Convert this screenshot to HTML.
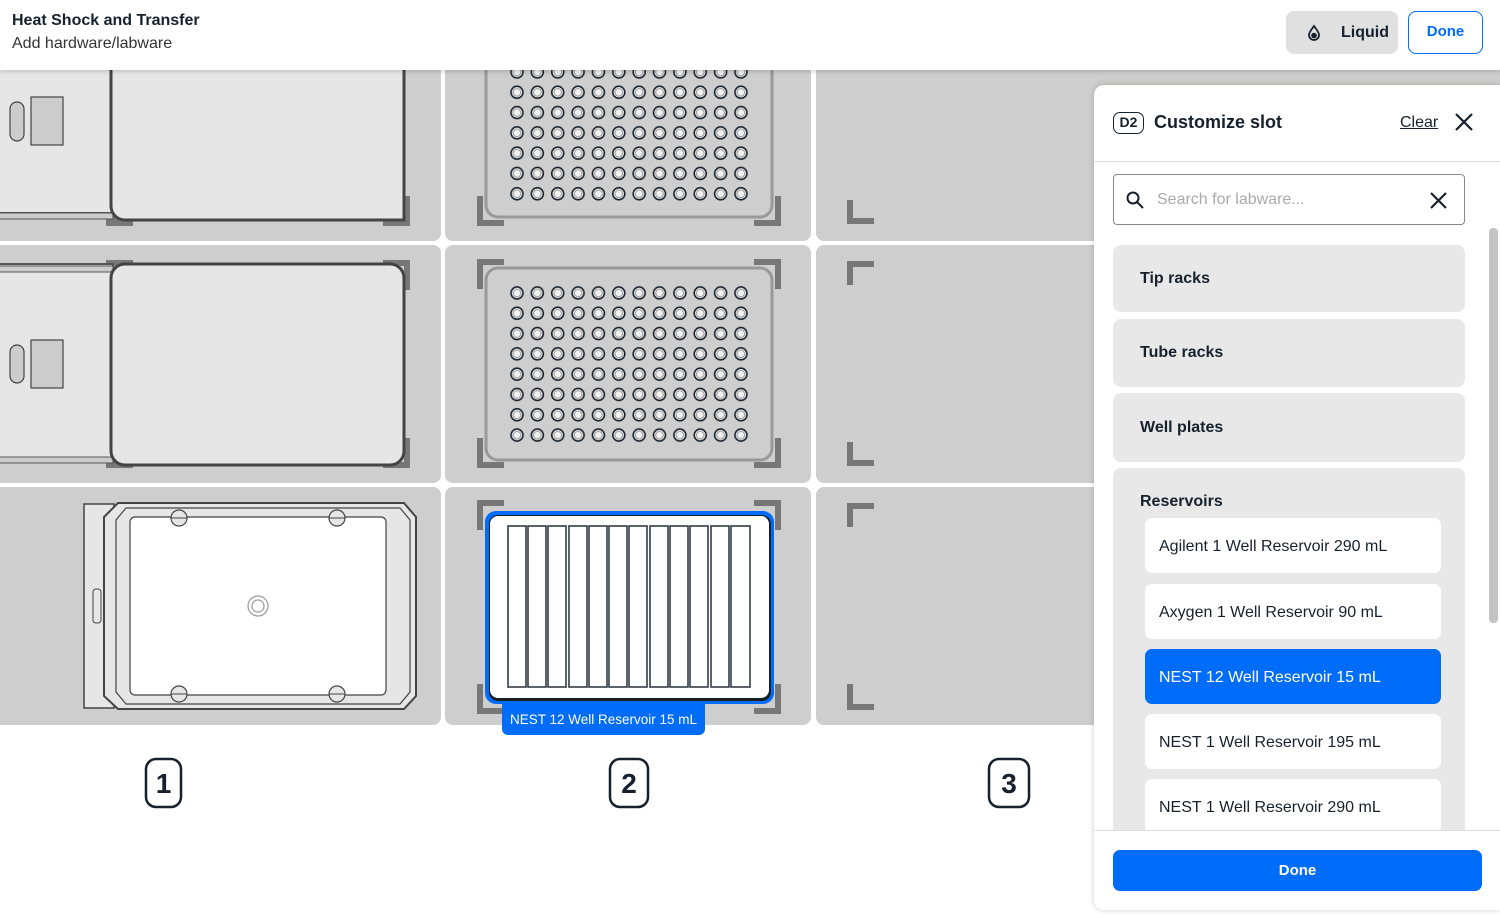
<!DOCTYPE html>
<html><head><meta charset="utf-8"><style>
*{box-sizing:border-box;margin:0;padding:0}
body{width:1500px;height:914px;overflow:hidden;background:#fff;font-family:"Liberation Sans",sans-serif;position:relative;color:#16212d}
.hdr{position:absolute;left:0;top:0;width:1500px;height:70px;background:#fff;box-shadow:0 2px 4px rgba(0,0,0,.15);z-index:3}
.t1{position:absolute;left:12px;top:12px;font-size:16px;font-weight:bold}
.t2{position:absolute;left:12px;top:35px;font-size:16px;color:#333}
.liq{position:absolute;left:1286px;top:11px;width:112px;height:43px;background:#e0e0e0;border-radius:8px;font-size:16px;font-weight:bold;padding:13px 0 0 55px}
.dn{position:absolute;left:1408px;top:11px;width:75px;height:43px;border:1.5px solid #006cfa;border-radius:8px;color:#006cfa;font-weight:bold;font-size:15px;text-align:center;line-height:40px}
svg.deck{position:absolute;left:0;top:0}
.panel{position:absolute;left:1094px;top:85px;width:406px;height:825px;background:#fff;border-radius:10px 0 0 10px;box-shadow:0 0 6px rgba(0,0,0,.2);overflow:hidden;z-index:4}
.ph{height:77px;border-bottom:1px solid #ddd;position:relative}
.d2{position:absolute;left:19px;top:27px;width:31px;height:22px;border:1.5px solid #16212d;border-radius:7px;font-size:14px;font-weight:bold;text-align:center;line-height:19px}
.cs{position:absolute;left:60px;top:27px;font-size:18px;font-weight:bold}
.clr{position:absolute;left:306px;top:29px;font-size:16px;text-decoration:underline}
.srch{position:absolute;left:19px;top:89px;width:352px;height:51px;border:1px solid #888;border-radius:4px;color:#aaa;font-size:16px;padding:16px 0 0 43px}
.cat{position:absolute;left:19px;width:352px;background:#e8e8e8;border-radius:8px;font-size:16px;font-weight:bold;padding-left:27px}
.it{position:absolute;left:51px;width:296px;height:55px;background:#fff;border-radius:7px;font-size:16px;padding:20px 0 0 14px}
.foot{position:absolute;left:0;top:745px;width:406px;height:80px;background:#fff;border-top:1px solid #ddd}
.fb{position:absolute;left:19px;top:19px;width:369px;height:41px;background:#006cfa;border-radius:7px;color:#fff;font-weight:bold;font-size:15px;text-align:center;line-height:41px}
</style></head><body>
<div style="position:absolute;left:1090px;top:60px;width:410px;height:60px;background:#cdcecd;border-radius:0 10px 0 0"></div>
<svg class="deck" width="1100" height="914" viewBox="0 0 1100 914">
<defs>
<pattern id="w" patternUnits="userSpaceOnUse" x="506.8" y="61.8" width="20.36" height="20.3"><circle cx="10.2" cy="10.2" r="6" fill="#f2f2f2" stroke="#1a222c" stroke-width="1.6"/><circle cx="10.2" cy="10.2" r="3.8" fill="none" stroke="#999" stroke-width="1"/></pattern>
<pattern id="w2" patternUnits="userSpaceOnUse" x="506.8" y="282.8" width="20.36" height="20.3"><circle cx="10.2" cy="10.2" r="6" fill="#f2f2f2" stroke="#1a222c" stroke-width="1.6"/><circle cx="10.2" cy="10.2" r="3.8" fill="none" stroke="#999" stroke-width="1"/></pattern>
</defs>
<g fill="#cdcecd">
<rect x="-10" y="60" width="451" height="181" rx="8"/><rect x="445" y="60" width="366" height="181" rx="8"/><rect x="816" y="60" width="290" height="181" rx="8"/>
<rect x="-10" y="245" width="451" height="238" rx="8"/><rect x="445" y="245" width="366" height="238" rx="8"/><rect x="816" y="245" width="290" height="238" rx="8"/>
<rect x="-10" y="487" width="451" height="238" rx="8"/><rect x="445" y="487" width="366" height="238" rx="8"/><rect x="816" y="487" width="290" height="238" rx="8"/>
</g>
<g fill="#777">
<path d="M106 216h27v10h-27z M383 226h27v-30h-6v24h-21z"/>
<path d="M106 260h27v6h-27z M383 260h27v30h-6v-24h-21z M106 462h27v6h-27z M383 468h27v-30h-6v24h-21z"/>
<path d="M477 196h6v24h21v6h-27z M781 196h-6v24h-21v6h27z"/>
<path d="M477 289h6v-24h21v-6h-27z M781 289h-6v-24h-21v-6h27z M477 438h6v24h21v6h-27z M781 438h-6v24h-21v6h27z"/>
<path d="M477 530h6v-24h21v-6h-27z M781 530h-6v-24h-21v-6h27z M477 684h6v24h21v6h-27z M781 684h-6v24h-21v6h27z"/>
<path d="M847 200h6v18h21v6h-27z M847 285h6v-18h21v-6h-27z M847 442h6v18h21v6h-27z M847 527h6v-18h21v-6h-27z M847 684h6v20h21v6h-27z"/>
</g>
<rect x="-5" y="55" width="118" height="158" fill="#e6e6e6" stroke="#555" stroke-width="2"/>
<rect x="-5" y="213" width="118" height="6" fill="#ccc" stroke="#555" stroke-width="1"/>
<path d="M111 60V206a14 14 0 0 0 14 14H404V60" fill="#e6e6e6" stroke="#444" stroke-width="3"/>
<rect x="10" y="102" width="14" height="39" rx="7" fill="#ccc" stroke="#444" stroke-width="1.2"/>
<rect x="31" y="97" width="32" height="48" fill="#ccc" stroke="#444" stroke-width="1.2"/>
<rect x="-5" y="264" width="118" height="196" fill="#e6e6e6" stroke="#555" stroke-width="2"/>
<rect x="-5" y="266" width="118" height="6" fill="#ccc" stroke="#555" stroke-width="1"/>
<rect x="-5" y="457" width="118" height="6" fill="#ccc" stroke="#555" stroke-width="1"/>
<rect x="111" y="264" width="293" height="201" rx="14" fill="#e6e6e6" stroke="#444" stroke-width="3"/>
<rect x="10" y="345" width="14" height="38" rx="7" fill="#ccc" stroke="#444" stroke-width="1.2"/>
<rect x="31" y="340" width="32" height="48" fill="#ccc" stroke="#444" stroke-width="1.2"/>
<rect x="84" y="504" width="30" height="204" fill="#e6e6e6" stroke="#444" stroke-width="1.5"/>
<rect x="93" y="589" width="8" height="34" rx="3" fill="#e6e6e6" stroke="#444" stroke-width="1"/>
<path d="M118 503H404l12 14V696l-12 13H118l-14-13V517z" fill="#e6e6e6" stroke="#444" stroke-width="2"/>
<path d="M126 508H400l10 12V692l-10 12H126l-10-12V520z" fill="none" stroke="#444" stroke-width="1.2"/>
<rect x="130" y="517" width="256" height="178" rx="5" fill="#fff" stroke="#444" stroke-width="1.2"/>
<g fill="#e6e6e6" stroke="#444" stroke-width="1.2"><circle cx="179" cy="518" r="8"/><circle cx="337" cy="518" r="8"/><circle cx="179" cy="694" r="8"/><circle cx="337" cy="694" r="8"/></g>
<g stroke="#444" stroke-width="1"><path d="M171 518h16M329 518h16M171 694h16M329 694h16"/></g>
<circle cx="258" cy="606" r="10" fill="none" stroke="#999" stroke-width="1.2"/><circle cx="258" cy="606" r="6" fill="none" stroke="#999" stroke-width="1.2"/>
<path d="M486 60V205a12 12 0 0 0 12 12H760a12 12 0 0 0 12-12V60" fill="#cdcecd" stroke="#999" stroke-width="3"/>
<rect x="506" y="62" width="245" height="142" fill="url(#w)"/>
<rect x="486" y="268" width="286" height="192" rx="12" fill="#cdcecd" stroke="#999" stroke-width="3"/>
<rect x="506" y="283" width="245" height="163" fill="url(#w2)"/>
<rect x="485" y="511" width="289" height="193" rx="11" fill="#006cfa"/>
<rect x="489" y="515" width="282" height="186" rx="9" fill="#1a1f26"/>
<rect x="490" y="516" width="279" height="182" rx="8" fill="#fff"/>
<g fill="#fff" stroke="#333c46" stroke-width="1.6">
<rect x="508" y="526" width="18" height="161"/><rect x="528" y="526" width="18" height="161"/><rect x="548" y="526" width="18" height="161"/><rect x="569" y="526" width="18" height="161"/><rect x="589" y="526" width="18" height="161"/><rect x="609" y="526" width="18" height="161"/><rect x="629" y="526" width="18" height="161"/><rect x="650" y="526" width="18" height="161"/><rect x="670" y="526" width="18" height="161"/><rect x="690" y="526" width="18" height="161"/><rect x="711" y="526" width="18" height="161"/><rect x="731" y="526" width="19" height="161"/>
</g>
<rect x="502" y="703" width="203" height="32" rx="6" fill="#006cfa"/>
<rect x="502" y="703" width="203" height="10" fill="#006cfa"/>
<text x="603.5" y="724" fill="#fff" font-size="13.5" text-anchor="middle" font-family="Liberation Sans">NEST 12 Well Reservoir 15 mL</text>
<g fill="#fff" stroke="#16212d" stroke-width="2.5"><rect x="146" y="759" width="35" height="48" rx="10"/><rect x="610" y="759" width="38" height="48" rx="10"/><rect x="989" y="759" width="40" height="48" rx="10"/></g>
<g font-size="28" font-weight="bold" fill="#16212d" text-anchor="middle" font-family="Liberation Sans"><text x="163.5" y="793">1</text><text x="629" y="793">2</text><text x="1009" y="793">3</text></g>
</svg>
<div class="hdr">
<div class="t1">Heat Shock and Transfer</div>
<div class="t2">Add hardware/labware</div>
<div class="liq"><svg style="position:absolute;left:20px;top:13px" width="16" height="18" viewBox="0 0 16 18"><path d="M8 2C6 5 3 8 3 11a5 5 0 0 0 10 0c0-3-3-6-5-9z" fill="none" stroke="#16212d" stroke-width="1.8"/><circle cx="8" cy="11.5" r="2.8" fill="#16212d"/></svg>Liquid</div>
<div class="dn">Done</div>
</div>
<div class="panel">
<div class="ph"><div class="d2">D2</div><div class="cs">Customize slot</div><div class="clr">Clear</div>
<svg style="position:absolute;left:360px;top:27px" width="20" height="20" viewBox="0 0 20 20"><path d="M2 2L18 18M18 2L2 18" stroke="#16212d" stroke-width="2.2"/></svg></div>
<div class="srch">Search for labware...
<svg style="position:absolute;left:12px;top:16px" width="18" height="18" viewBox="0 0 18 18"><circle cx="7" cy="7" r="5.5" fill="none" stroke="#16212d" stroke-width="2"/><path d="M11 11L17 17" stroke="#16212d" stroke-width="2"/></svg>
<svg style="position:absolute;left:316px;top:17px" width="17" height="17" viewBox="0 0 17 17"><path d="M1 1L16 16M16 1L1 16" stroke="#16212d" stroke-width="2.2"/></svg></div>
<div class="cat" style="top:160px;height:67px;line-height:67px">Tip racks</div>
<div class="cat" style="top:234px;height:68px;line-height:68px">Tube racks</div>
<div class="cat" style="top:308px;height:69px;line-height:69px">Well plates</div>
<div class="cat" style="top:383px;height:400px;padding-top:25px">Reservoirs</div>
<div class="it" style="top:433px">Agilent 1 Well Reservoir 290 mL</div>
<div class="it" style="top:499px">Axygen 1 Well Reservoir 90 mL</div>
<div class="it" style="top:564px;background:#006cfa;color:#fff">NEST 12 Well Reservoir 15 mL</div>
<div class="it" style="top:629px">NEST 1 Well Reservoir 195 mL</div>
<div class="it" style="top:694px">NEST 1 Well Reservoir 290 mL</div>
<div style="position:absolute;left:395px;top:143px;width:9px;height:395px;background:#c4c4c4;border-radius:4px"></div>
<div class="foot"><div class="fb">Done</div></div>
</div>
</body></html>
